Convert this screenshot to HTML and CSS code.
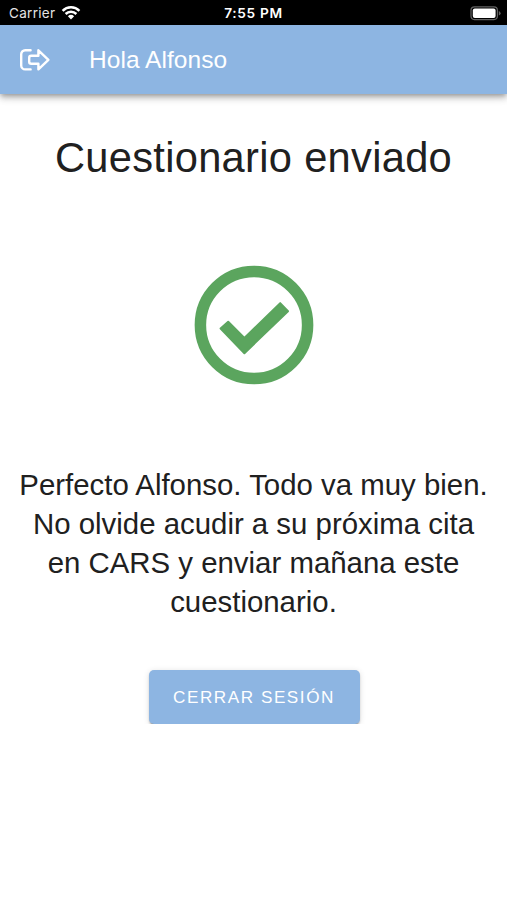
FILE: index.html
```html
<!DOCTYPE html>
<html lang="es">
<head>
<meta charset="utf-8">
<title>Cuestionario enviado</title>
<link rel="stylesheet" href="styles.css">
</head>
<body>
<div class="status">
  <div class="status-left">
    <span class="carrier">Carrier</span>
    <svg class="wifi" width="20" height="15" viewBox="0 0 20 15" fill="none" stroke="#fff" stroke-width="2.5">
      <path d="M1.6 5.8a12 12 0 0 1 16.8 0"/>
      <path d="M4.6 9a7.7 7.7 0 0 1 10.8 0"/>
      <path d="M10 14.4 6.9 11.2a4.5 4.5 0 0 1 6.2 0Z" fill="#fff" stroke="none"/>
    </svg>
  </div>
  <span class="clock">7:55 PM</span>
  <div class="status-right">
    <svg width="31" height="15" viewBox="0 0 31 15">
      <rect x="1" y=".8" width="26.4" height="12.8" rx="3.5" fill="none" stroke="#626262" stroke-width="1.2"/>
      <rect x="2.8" y="2.5" width="22.8" height="9.4" rx="2" fill="#fff"/>
      <path d="M28.8 5v4.6q1.8-.7 1.8-2.3T28.8 5Z" fill="#626262"/>
    </svg>
  </div>
</div>
<header class="bar">
  <svg class="exit" width="32" height="24" viewBox="0 0 32 24" fill="none" stroke="#fff" stroke-width="2.4" stroke-linejoin="round" stroke-linecap="round">
    <path d="M11.6 2.2H6.2a4 4 0 0 0-4 4v11.2a4 4 0 0 0 4 4h5.4"/>
    <path d="M19.4 2.3 29.4 11.8 19.4 21.3v-5.5h-7.2a2 2 0 0 1-2-2V9.8a2 2 0 0 1 2-2h7.2z"/>
  </svg>
  <span class="greeting">Hola Alfonso</span>
</header>
<main class="content">
  <h1>Cuestionario enviado</h1>
  <svg class="check" width="120" height="120" viewBox="0 0 120 120">
    <circle cx="60" cy="60" r="53.6" fill="none" stroke="#5ba55e" stroke-width="11.5"/>
    <path d="M26.6 63.5 34.2 56.7 50.4 72.9 86.2 38.1 94 46.2 50.4 88.2Z" fill="#5ba55e" stroke="#5ba55e" stroke-width="2" stroke-linejoin="round"/>
  </svg>
  <p>Perfecto Alfonso. Todo va muy bien.<br>No olvide acudir a su próxima cita<br>en CARS y enviar mañana este<br>cuestionario.</p>
  <button type="button">CERRAR SESIÓN</button>
</main>
</body>
</html>
```
FILE: styles.css
```css
* { box-sizing: border-box; }
body {
  margin: 0;
  background: #fff;
  color: #202020;
  font-family: "Liberation Sans", Arial, sans-serif;
}
.status {
  height: 25px;
  padding: 1px 6px 0 9px;
  display: grid;
  grid-template-columns: 1fr auto 1fr;
  align-items: center;
  background: #000;
  color: #fff;
  font-family: Inter, sans-serif;
  font-size: 13.5px;
}
.status-left { display: flex; align-items: center; gap: 6px; }
.carrier { color: #e4e4e4; letter-spacing: .3px; }
.wifi { margin-top: -2px; }
.clock { margin-right: 3px; font-weight: 600; font-size: 13.7px; letter-spacing: .65px; }
.status-right { display: flex; justify-content: flex-end; }
.bar {
  height: 69px;
  padding: 0 19px;
  display: flex;
  align-items: center;
  gap: 38px;
  background: #8db5e2;
  color: #fff;
  box-shadow: 0 2px 5px -1px rgba(0,0,0,.3), 0 5px 6px rgba(0,0,0,.14), 0 1px 12px rgba(0,0,0,.1);
}
.greeting { font-size: 24.5px; line-height: 30px; letter-spacing: .05px; white-space: nowrap; }
.content {
  display: flex;
  flex-direction: column;
  align-items: center;
  padding-top: 39px;
  text-align: center;
}
h1 {
  margin: 0;
  font-size: 41.64px;
  font-weight: 400;
  line-height: 49px;
  letter-spacing: .306px;
  white-space: nowrap;
}
.check { margin-top: 83px; }
p {
  margin: 79.5px 0 0;
  font-size: 29.4px;
  line-height: 39.2px;
  white-space: nowrap;
}
button {
  margin: 49px 0 0 1px;
  width: 211px;
  height: 54px;
  padding: 0;
  border: 0;
  border-radius: 5px;
  background: #8db5e2;
  color: #fff;
  font-family: inherit;
  font-size: 17.15px;
  letter-spacing: 1.53px;
  box-shadow: 0 3px 2px -2px rgba(0,0,0,.3), 0 2px 2px rgba(0,0,0,.16), 0 1px 6px rgba(0,0,0,.12);
}
```
